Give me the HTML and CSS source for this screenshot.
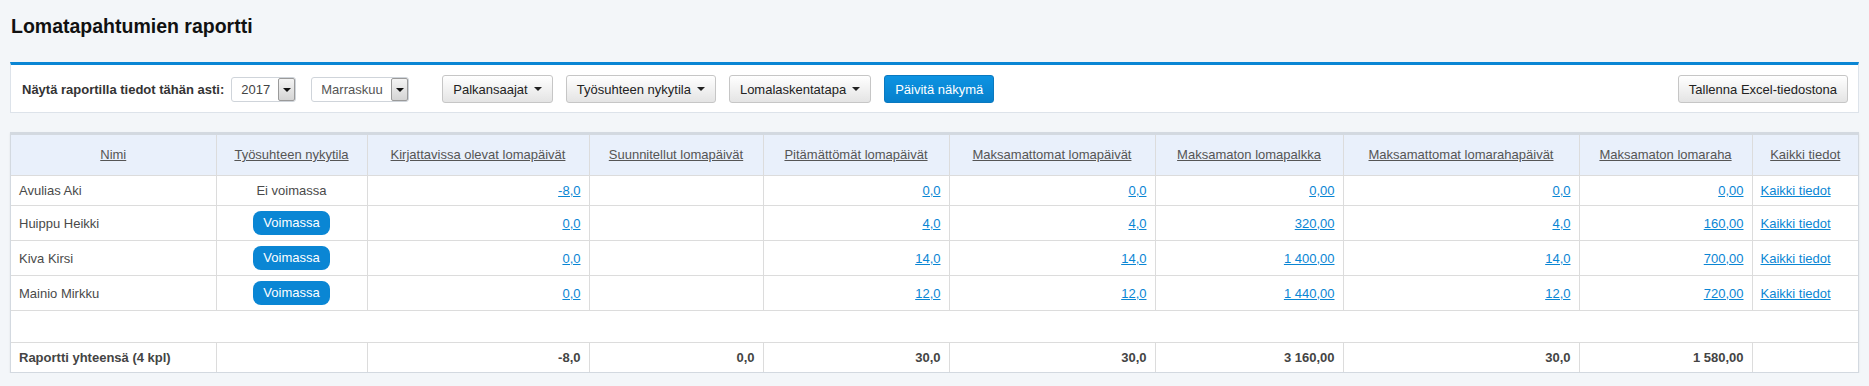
FILE: index.html
```html
<!DOCTYPE html>
<html lang="fi">
<head>
    <meta charset="UTF-8">
    <title>Lomatapahtumien raportti</title>
    <link rel="stylesheet" href="styles.css">
</head>
<body>
    <h1 class="page-title">Lomatapahtumien raportti</h1>

    <div class="panel filter-bar">
        <span class="filter-label">Näytä raportilla tiedot tähän asti:</span>
        <div class="fake-select year-select">
            <span class="value">2017</span>
            <span class="arrow"></span>
        </div>
        <div class="fake-select month-select">
            <span class="value">Marraskuu</span>
            <span class="arrow"></span>
        </div>

        <div class="button-group">
            <a class="btn">Palkansaajat <span class="caret"></span></a>
            <a class="btn">Työsuhteen nykytila <span class="caret"></span></a>
            <a class="btn">Lomalaskentatapa <span class="caret"></span></a>
            <a class="btn btn-primary">Päivitä näkymä</a>
        </div>

        <a class="btn btn-export">Tallenna Excel-tiedostona</a>
    </div>

    <div class="panel table-panel">
        <table class="report">
            <colgroup>
                <col style="width: 205px">
                <col style="width: 151px">
                <col style="width: 222px">
                <col style="width: 174px">
                <col style="width: 186px">
                <col style="width: 206px">
                <col style="width: 188px">
                <col style="width: 236px">
                <col style="width: 173px">
                <col style="width: 106px">
            </colgroup>
            <thead>
                <tr>
                    <th><a>Nimi</a></th>
                    <th><a>Työsuhteen nykytila</a></th>
                    <th><a>Kirjattavissa olevat lomapäivät</a></th>
                    <th><a>Suunnitellut lomapäivät</a></th>
                    <th><a>Pitämättömät lomapäivät</a></th>
                    <th><a>Maksamattomat lomapäivät</a></th>
                    <th><a>Maksamaton lomapalkka</a></th>
                    <th><a>Maksamattomat lomarahapäivät</a></th>
                    <th><a>Maksamaton lomaraha</a></th>
                    <th><a>Kaikki tiedot</a></th>
                </tr>
            </thead>
            <tbody>
                <tr>
                    <td>Avulias Aki</td>
                    <td class="center">Ei voimassa</td>
                    <td class="num"><a>-8,0</a></td>
                    <td></td>
                    <td class="num"><a>0,0</a></td>
                    <td class="num"><a>0,0</a></td>
                    <td class="num"><a>0,00</a></td>
                    <td class="num"><a>0,0</a></td>
                    <td class="num"><a>0,00</a></td>
                    <td><a>Kaikki tiedot</a></td>
                </tr>
                <tr>
                    <td>Huippu Heikki</td>
                    <td class="center"><span class="badge">Voimassa</span></td>
                    <td class="num"><a>0,0</a></td>
                    <td></td>
                    <td class="num"><a>4,0</a></td>
                    <td class="num"><a>4,0</a></td>
                    <td class="num"><a>320,00</a></td>
                    <td class="num"><a>4,0</a></td>
                    <td class="num"><a>160,00</a></td>
                    <td><a>Kaikki tiedot</a></td>
                </tr>
                <tr>
                    <td>Kiva Kirsi</td>
                    <td class="center"><span class="badge">Voimassa</span></td>
                    <td class="num"><a>0,0</a></td>
                    <td></td>
                    <td class="num"><a>14,0</a></td>
                    <td class="num"><a>14,0</a></td>
                    <td class="num"><a>1 400,00</a></td>
                    <td class="num"><a>14,0</a></td>
                    <td class="num"><a>700,00</a></td>
                    <td><a>Kaikki tiedot</a></td>
                </tr>
                <tr>
                    <td>Mainio Mirkku</td>
                    <td class="center"><span class="badge">Voimassa</span></td>
                    <td class="num"><a>0,0</a></td>
                    <td></td>
                    <td class="num"><a>12,0</a></td>
                    <td class="num"><a>12,0</a></td>
                    <td class="num"><a>1 440,00</a></td>
                    <td class="num"><a>12,0</a></td>
                    <td class="num"><a>720,00</a></td>
                    <td><a>Kaikki tiedot</a></td>
                </tr>
                <tr class="spacer-row">
                    <td colspan="10"></td>
                </tr>
                <tr class="total-row">
                    <td>Raportti yhteensä (4 kpl)</td>
                    <td></td>
                    <td class="num">-8,0</td>
                    <td class="num">0,0</td>
                    <td class="num">30,0</td>
                    <td class="num">30,0</td>
                    <td class="num">3 160,00</td>
                    <td class="num">30,0</td>
                    <td class="num">1 580,00</td>
                    <td></td>
                </tr>
            </tbody>
        </table>
    </div>
</body>
</html>
```

FILE: styles.css
```css
* {
    margin: 0;
    padding: 0;
    box-sizing: border-box;
}

body {
    font-family: 'Liberation Sans', Arial, sans-serif;
    font-size: 13px;
    background-color: #f3f6f9;
    color: #4a4a4a;
    padding: 14px 10px 0;
}

a {
    color: #0a86d4;
    text-decoration: underline;
    cursor: pointer;
}

.page-title {
    font-size: 19.5px;
    line-height: 24px;
    font-weight: bold;
    color: #111;
    margin-left: 1px;
    margin-bottom: 24px;
}

.panel {
    background-color: white;
    border: 1px solid #dde3ea;
    border-top: 3px solid #0a86d4;
}

/* filter bar */

.filter-bar {
    display: flex;
    align-items: center;
    padding: 10px 10px 9px 11px;
    margin-bottom: 19px;
}

.filter-label {
    font-weight: bold;
    color: #333;
    margin-right: 7px;
}

.fake-select {
    display: flex;
    align-items: center;
    height: 25px;
    border: 1px solid #cfd4da;
    border-radius: 3px;
    background-color: white;
    color: #444;
}

.fake-select .value {
    flex: 1;
    padding-left: 9px;
}

.fake-select .arrow {
    width: 17px;
    height: 23px;
    border: 1px solid #9a9a9a;
    border-radius: 2px;
    background: linear-gradient(#f4f4f4, #d4d4d4);
    position: relative;
}

.fake-select .arrow::after {
    content: "";
    position: absolute;
    left: 4px;
    top: 9px;
    border-left: 4px solid transparent;
    border-right: 4px solid transparent;
    border-top: 4px solid #111;
}

.year-select {
    width: 65px;
}

.month-select {
    width: 98px;
    margin-left: 15px;
    color: #555;
}

.button-group {
    display: flex;
    gap: 13px;
    margin-left: 33px;
}

.btn {
    display: inline-flex;
    align-items: center;
    height: 28px;
    padding: 0 10px;
    border: 1px solid #c6c6c6;
    border-radius: 3px;
    background: linear-gradient(#ffffff, #e4e4e4);
    color: #222;
    text-decoration: none;
    white-space: nowrap;
}

.caret {
    display: inline-block;
    margin-left: 6px;
    border-left: 4px solid transparent;
    border-right: 4px solid transparent;
    border-top: 4px solid #222;
}

.btn-primary {
    background: linear-gradient(#0d93e2, #0680cc);
    border-color: #0a79c0;
    color: white;
}

.btn-export {
    margin-left: auto;
}

/* report table */

.table-panel {
    box-shadow: 0 1px 2px rgba(0, 0, 0, 0.08);
    border-color: #d3d9e0;
}

.report {
    width: 100%;
    table-layout: fixed;
    border-collapse: collapse;
}

.report th,
.report td {
    border: 1px solid #dcdcdc;
    padding: 5px 8px;
    line-height: 19px;
    white-space: nowrap;
}

.report tr > :first-child {
    border-left: none;
}

.report tr > :last-child {
    border-right: none;
}

.report tr:last-child td {
    border-bottom: none;
}

.report th {
    border-top: none;
    background-color: #e9f0fb;
    font-weight: normal;
    padding: 10px 8px 11px;
}

.report th a {
    color: #555;
}

.report .num {
    text-align: right;
}

.report .center {
    text-align: center;
}

.badge {
    display: inline-block;
    height: 24px;
    line-height: 24px;
    padding: 0 10px;
    border-radius: 8px;
    background-color: #0a86d4;
    color: white;
    vertical-align: middle;
}

.spacer-row td {
    height: 32px;
}

.total-row td {
    font-weight: bold;
    color: #444;
}
```
